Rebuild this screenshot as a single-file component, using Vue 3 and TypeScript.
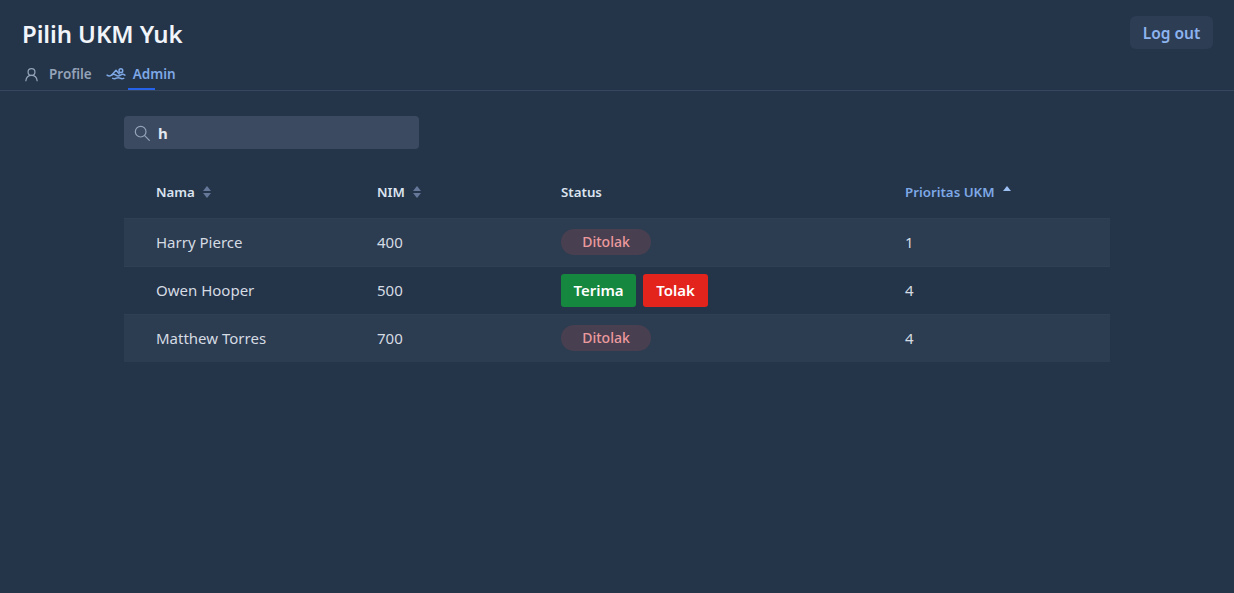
<script setup lang="ts">
interface Row {
  nama: string
  nim: number
  ditolak: boolean
  prioritas: number
}

const rows: Row[] = [
  { nama: 'Harry Pierce', nim: 400, ditolak: true, prioritas: 1 },
  { nama: 'Owen Hooper', nim: 500, ditolak: false, prioritas: 4 },
  { nama: 'Matthew Torres', nim: 700, ditolak: true, prioritas: 4 }
]
</script>

<template>
  <div class="page">
    <header class="topbar">
      <div class="brand">
        <h1 class="title">Pilih UKM Yuk</h1>
        <nav class="tabs">
          <a class="tab">
            <svg class="tab-icon" viewBox="0 0 24 24" fill="none" stroke="currentColor" stroke-width="2" stroke-linecap="round" stroke-linejoin="round">
              <circle cx="12" cy="8" r="5.500" />
              <path d="M3 22c.6-5.500 4-8.500 9-8.500s8.400 3 9 8.500" />
            </svg>
            <span>Profile</span>
          </a>
          <a class="tab active">
            <svg class="tab-icon swim" viewBox="0 0 24 16" fill="none" stroke="currentColor" stroke-width="1.800" stroke-linecap="round" stroke-linejoin="round">
              <circle cx="18" cy="4.500" r="2.300" />
              <path d="M7 9.500l5-5.500 4 4.500" />
              <path d="M1 10c2 1.500 3.500 1.500 5.500 0s3.500-1.500 5.500 0 3.500 1.500 5.500 0 3.500-1.500 5.500 0" />
              <path d="M8 14c1.500.7 3 .7 4.500-.2s3-.9 4.500 0 3 .9 4.500.2" />
            </svg>
            <span>Admin</span>
          </a>
        </nav>
      </div>
      <button class="logout">Log out</button>
    </header>

    <main class="content">
      <label class="search">
        <svg class="search-icon" viewBox="0 0 24 24" fill="none" stroke="currentColor" stroke-width="1.800" stroke-linecap="round">
          <circle cx="10" cy="10" r="8" />
          <path d="M16 16l7 7" />
        </svg>
        <input class="search-input" value="h" />
      </label>

      <table class="table">
        <thead>
          <tr>
            <th class="col-nama">
              Nama
              <svg class="sort" viewBox="0 0 8 12"><path d="M4 0l4 5h-8z" /><path d="M4 12l4-5h-8z" /></svg>
            </th>
            <th class="col-nim">
              NIM
              <svg class="sort" viewBox="0 0 8 12"><path d="M4 0l4 5h-8z" /><path d="M4 12l4-5h-8z" /></svg>
            </th>
            <th class="col-status">Status</th>
            <th class="col-prioritas sorted">
              Prioritas UKM
              <svg class="sort-up" viewBox="0 0 8 5"><path d="M4 0l4 5h-8z" /></svg>
            </th>
          </tr>
        </thead>
        <tbody>
          <tr v-for="row in rows" :key="row.nim">
            <td>{{ row.nama }}</td>
            <td>{{ row.nim }}</td>
            <td class="status-cell">
              <span v-if="row.ditolak" class="badge">Ditolak</span>
              <div v-else class="actions">
                <button class="btn terima">Terima</button>
                <button class="btn tolak">Tolak</button>
              </div>
            </td>
            <td>{{ row.prioritas }}</td>
          </tr>
        </tbody>
      </table>
    </main>
  </div>
</template>

<style>
body {
  background: #243449;
}
</style>

<style scoped>
.page {
  min-height: 593px;
  background: #243449;
  font-family: "Noto Sans", "Open Sans", sans-serif;
  color: #e2e8f0;
  overflow: hidden;
}

.topbar {
  display: flex;
  justify-content: space-between;
  align-items: flex-start;
  height: 91px;
  box-sizing: border-box;
  padding: 16px 22px 0;
  border-bottom: 1px solid #35465e;
}

.title {
  margin: 0;
  font-size: 24px;
  line-height: 36px;
  font-weight: 600;
  letter-spacing: -0.1px;
  color: #f1f5f9;
}

.tabs {
  display: flex;
  gap: 12px;
  margin-top: 4px;
}

.tab {
  position: relative;
  display: flex;
  align-items: center;
  gap: 10px;
  height: 34px;
  padding: 2px 0 0 2px;
  box-sizing: border-box;
  font-size: 13.5px;
  font-weight: 600;
  color: #94a3b8;
}

.tab-icon {
  width: 15px;
  height: 15px;
}

.tab-icon.swim {
  width: 20px;
  height: 13px;
  margin-bottom: 1px;
}

.tab.active {
  gap: 7px;
  color: #7ea8e6;
}

.tab.active::after {
  content: "";
  position: absolute;
  left: 24px;
  bottom: 0;
  width: 27px;
  height: 2px;
  background: #2563eb;
}

.logout {
  width: 83px;
  height: 33px;
  margin-right: -1px;
  border: none;
  border-radius: 6px;
  background: #2d3d54;
  color: #8db4ee;
  font-family: inherit;
  font-size: 15.5px;
  font-weight: 600;
}

.content {
  width: 986px;
  margin-left: 124px;
  padding-top: 25px;
}

.search {
  display: flex;
  align-items: center;
  width: 295px;
  height: 33px;
  padding-left: 10px;
  box-sizing: border-box;
  border-radius: 4px;
  background: #3b4a60;
  color: #94a3b8;
}

.search-icon {
  width: 16px;
  height: 16px;
  flex: none;
}

.search-input {
  width: 200px;
  margin-left: 8px;
  padding: 0;
  border: none;
  outline: none;
  background: transparent;
  color: #e2e8f0;
  font-family: inherit;
  font-size: 15px;
  font-weight: 700;
}

.table {
  width: 986px;
  margin-top: 17px;
  border-collapse: collapse;
  table-layout: fixed;
}

th {
  box-sizing: border-box;
  height: 52px;
  padding: 0 0 0 32px;
  text-align: left;
  font-size: 13.3px;
  font-weight: 600;
  color: #dbe4f0;
}

.col-nama {
  width: 221px;
}

.col-nim {
  width: 184px;
}

.col-status {
  width: 344px;
}

.sorted {
  color: #7ea8e6;
}

.sort {
  width: 8px;
  height: 12px;
  margin-left: 5px;
  fill: #66789a;
  vertical-align: -1px;
}

.sort-up {
  width: 8px;
  height: 5px;
  margin: 0 0 6px 5px;
  fill: #9dc0f2;
}

td {
  box-sizing: border-box;
  height: 48px;
  padding: 0 0 0 32px;
  font-size: 15px;
  color: #d5dbe3;
  border-top: 1px solid #2f3f56;
}

tbody tr:nth-child(odd) {
  background: #2c3c51;
}

.badge {
  display: inline-block;
  width: 90px;
  height: 26px;
  line-height: 25px;
  text-align: center;
  border-radius: 13px;
  background: #483f50;
  color: #ec9a9e;
  font-size: 14px;
  font-weight: 500;
}

.status-cell {
  vertical-align: middle;
}

.actions {
  display: flex;
  gap: 7px;
}

.btn {
  height: 33px;
  padding: 0;
  border: none;
  border-radius: 3px;
  color: #fff;
  font-family: inherit;
  font-size: 15px;
  font-weight: 600;
}

.terima {
  width: 75px;
  background: #16873f;
}

.tolak {
  width: 65px;
  background: #e3241c;
}
</style>
